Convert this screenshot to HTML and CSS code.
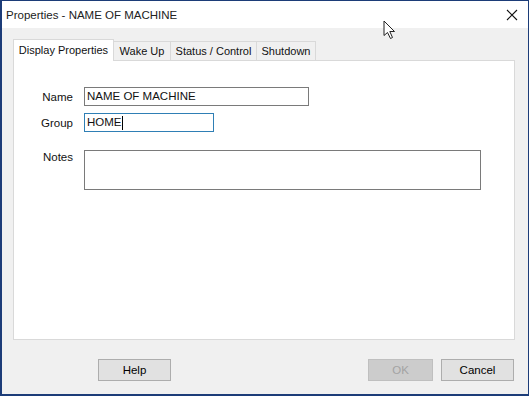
FILE: index.html
```html
<!DOCTYPE html>
<html lang="en">
<head>
    <meta charset="UTF-8">
    <title>Properties - NAME OF MACHINE</title>
    <link rel="stylesheet" href="styles.css">
</head>
<body>
    <div class="window">
        <div class="titlebar">
            <span class="title">Properties - NAME OF MACHINE</span>
            <svg class="close" width="12" height="12" viewBox="0 0 12 12">
                <path d="M1 1 L11 11 M11 1 L1 11" stroke="#111" stroke-width="1.1" fill="none"/>
            </svg>
        </div>

        <div class="content">
            <div class="tabs">
                <div class="tab active tab-display">Display Properties</div>
                <div class="tab tab-wake">Wake Up</div>
                <div class="tab tab-status">Status / Control</div>
                <div class="tab tab-shutdown">Shutdown</div>
            </div>

            <div class="panel">
                <div class="form">
                    <label class="label">Name</label>
                    <div class="field name-field">NAME OF MACHINE</div>

                    <label class="label">Group</label>
                    <div class="field group-field focused">HOME<span class="caret"></span></div>

                    <label class="label notes-label">Notes</label>
                    <div class="field notes-field"></div>
                </div>
            </div>

            <div class="buttons">
                <button class="btn help">Help</button>
                <div class="spacer"></div>
                <button class="btn ok" disabled>OK</button>
                <button class="btn cancel">Cancel</button>
            </div>
        </div>

        <!-- mouse pointer over the title bar -->
        <svg class="pointer" width="14" height="20" viewBox="0 0 14 20">
            <path d="M1 1 L1 15.5 L4.5 12.5 L7.5 18.5 L9.5 17.5 L6.8 11.5 L11.5 11.5 Z" fill="#fff" stroke="#222" stroke-width="1" stroke-linejoin="miter"/>
        </svg>
    </div>
</body>
</html>
```

FILE: styles.css
```css
body {
    margin: 0;
    font-family: "Liberation Sans", Arial, sans-serif;
    font-size: 11.5px;
    color: #000;
    background: #f0f0f0;
}

.window {
    position: relative;
    width: 529px;
    height: 396px;
    box-sizing: border-box;
    border: 1px solid #1c3c78;
    border-bottom-width: 2px;
    border-left-width: 2px;
    display: flex;
    flex-direction: column;
    background: #f0f0f0;
}

.titlebar {
    height: 27px;
    background: #fff;
    display: flex;
    align-items: center;
    justify-content: space-between;
    padding: 0 10px 0 4px;
}

.title {
    font-size: 11.5px;
    color: #222;
}

.close {
    display: block;
}

.content {
    flex: 1;
    display: flex;
    flex-direction: column;
    padding: 10px 13px 0 11px;
}

.tabs {
    display: flex;
    align-items: flex-end;
    height: 22px;
    position: relative;
    z-index: 1;
}

.tab {
    height: 19px;
    line-height: 18px;
    box-sizing: border-box;
    text-align: center;
    border: 1px solid #d9d9d9;
    border-bottom: none;
    border-left: none;
    background: #f0f0f0;
    color: #111;
    font-size: 11px;
}

.tab.active {
    height: 22px;
    line-height: 20px;
    background: #fff;
    border-left: 1px solid #d9d9d9;
    margin-bottom: -1px;
}

.tab-display {
    width: 101px;
}

.tab-wake {
    width: 57px;
}

.tab-status {
    width: 86px;
}

.tab-shutdown {
    width: 59px;
}

.panel {
    height: 280px;
    box-sizing: border-box;
    background: #fff;
    border: 1px solid #d9d9d9;
    padding: 26px 0 0 0;
}

.form {
    display: grid;
    grid-template-columns: 59px auto;
    column-gap: 11px;
    row-gap: 7px;
    align-items: center;
    justify-items: start;
}

.label {
    justify-self: end;
    color: #111;
}

.field {
    height: 19px;
    box-sizing: border-box;
    border: 1px solid #7a7a7a;
    background: #fff;
    line-height: 17px;
    padding: 0 2px;
    display: flex;
    align-items: center;
    color: #111;
}

.name-field {
    width: 225px;
}

.group-field {
    width: 130px;
}

.focused {
    border-color: #2f7fb5;
}

.caret {
    display: inline-block;
    width: 1px;
    height: 14px;
    background: #000;
}

.notes-label {
    align-self: start;
    margin-top: 11px;
    line-height: 14px;
}

.notes-field {
    width: 397px;
    height: 40px;
    margin-top: 11px;
}

.buttons {
    display: flex;
    align-items: center;
    padding: 19px 1px 0 85px;
    gap: 8px;
}

.spacer {
    flex: 1;
}

.btn {
    font-family: inherit;
    font-size: 11.5px;
    height: 22px;
    width: 73px;
    padding: 0;
    background: #e1e1e1;
    border: 1px solid #adadad;
    color: #000;
}

.btn.ok {
    width: 65px;
    background: #cccccc;
    border-color: #bfbfbf;
    color: #a3a3a3;
}

.pointer {
    position: absolute;
    left: 381px;
    top: 19px;
}
```
